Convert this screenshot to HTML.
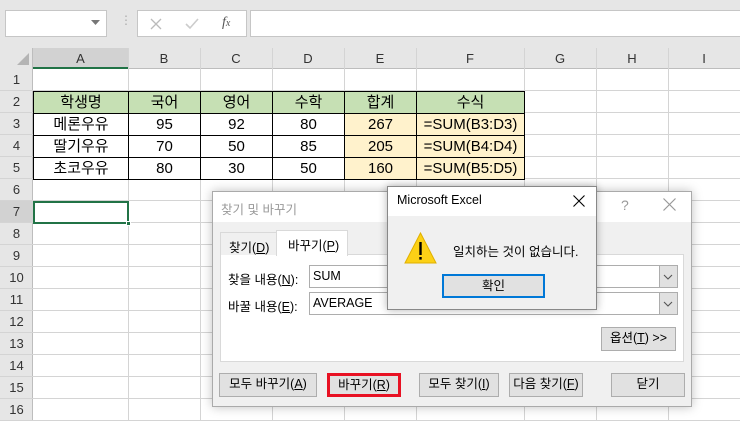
<!DOCTYPE html>
<html><head><meta charset="utf-8"><style>
*{box-sizing:border-box;margin:0;padding:0}
body{width:740px;height:421px;overflow:hidden;position:relative;background:#fff;font-family:"Liberation Sans","Noto Sans CJK KR",sans-serif;font-size:13px;color:#000}
.a{position:absolute}
.t{position:absolute;white-space:nowrap}
.hl{position:absolute;height:1px;background:#d4d4d4}
.vl{position:absolute;width:1px;background:#d4d4d4}
.btn{position:absolute;background:#e1e1e1;border:1px solid #adadad;text-align:center;font-size:12.5px;line-height:21px}
.cell{position:absolute;text-align:center;font-size:15px;line-height:22px;border:1px solid #000}
</style></head><body>
<div class="a" style="left:0;top:0;width:740px;height:48px;background:#e6e6e6"></div>
<div class="a" style="left:5px;top:10px;width:102px;height:27px;background:#fff;border:1px solid #c6c6c6"></div>
<svg class="a" style="left:91px;top:20px" width="10" height="6"><polygon points="0,0 9,0 4.5,5" fill="#777"/></svg>
<div class="t" style="left:120px;top:13px;color:#aaa;font-size:12px">⋮</div>
<div class="a" style="left:137px;top:10px;width:110px;height:27px;background:#fff;border:1px solid #c6c6c6"></div>
<svg class="a" style="left:150px;top:18px" width="12" height="12"><path d="M1 1L11 11M11 1L1 11" stroke="#bbb" stroke-width="1.3"/></svg>
<svg class="a" style="left:185px;top:18px" width="14" height="12"><path d="M1 6L5 10L13 1" stroke="#ccc" stroke-width="1.6" fill="none"/></svg>
<div class="t" style="left:222px;top:15px;color:#555;font-size:14px;font-style:italic;font-family:'Liberation Serif',serif">f<span style="font-size:10px">x</span></div>
<div class="a" style="left:250px;top:10px;width:495px;height:27px;background:#fff;border:1px solid #c6c6c6"></div>
<div class="a" style="left:0;top:48px;width:740px;height:21px;background:#e6e6e6;border-bottom:1px solid #bdbdbd"></div>
<div class="a" style="left:33px;top:48px;width:95px;height:21px;background:#d2d2d2;border-bottom:2px solid #217346"></div>
<div class="a" style="left:0;top:48px;width:33px;height:373px;background:#e6e6e6;border-right:1px solid #bdbdbd"></div>
<div class="a" style="left:0;top:201px;width:33px;height:22px;background:#d2d2d2"></div>
<svg class="a" style="left:16px;top:52px" width="14" height="14"><polygon points="13,1 13,13 1,13" fill="#b4b4b4"/></svg>
<script>
var xs=[33,128,200,272,344,416,524,596,668,740],L="ABCDEFGHI",h="";
for(var i=0;i<9;i++){h+='<div class="t" style="left:'+xs[i]+'px;width:'+(xs[i+1]-xs[i])+'px;top:51px;text-align:center;font-size:13px;color:#333">'+L[i]+'</div>';
 if(i>0)h+='<div class="vl" style="left:'+xs[i]+'px;top:48px;height:373px"></div>';}
for(var r=1;r<=16;r++){var y=69+(r-1)*22;h+='<div class="hl" style="left:0;width:740px;top:'+(y+21)+'px"></div><div class="t" style="left:0;width:33px;top:'+(y+3)+'px;text-align:center;font-size:13px;color:#333">'+r+'</div>';}
document.write(h);
var rows=[["학생명","국어","영어","수학","합계","수식"],["메론우유","95","92","80","267","=SUM(B3:D3)"],["딸기우유","70","50","85","205","=SUM(B4:D4)"],["초코우유","80","30","50","160","=SUM(B5:D5)"]];
var h2="";
for(var r=0;r<4;r++)for(var c=0;c<6;c++){var x=xs[c],w=xs[c+1]-x+1,y=91+r*22;var bg=r==0?"#c6e0b4":(c==4||c==5?"#fff2cc":"#fff");
h2+='<div class="cell" style="left:'+x+'px;top:'+y+'px;width:'+w+'px;height:23px;background:'+bg+'">'+rows[r][c]+'</div>';}
document.write(h2);
</script>
<div class="a" style="left:33px;top:201px;width:96px;height:23px;border:2px solid #217346"></div>
<div class="a" style="left:126px;top:221px;width:5px;height:5px;background:#217346;border:1px solid #fff"></div>
<div class="a" style="left:212px;top:191px;width:480px;height:216px;background:#f0f0f0;border:1px solid #aaa;box-shadow:0 0 10px rgba(0,0,0,.25)"></div>
<div class="a" style="left:213px;top:192px;width:478px;height:30px;background:#fff"></div>
<div class="t" style="left:221px;top:199px;color:#999;font-size:12.5px">찾기 및 바꾸기</div>
<div class="t" style="left:621px;top:197px;color:#999;font-size:14px">?</div>
<svg class="a" style="left:663px;top:198px" width="13" height="13"><path d="M0.5 0.5L12.5 12.5M12.5 0.5L0.5 12.5" stroke="#999" stroke-width="1.2"/></svg>
<div class="a" style="left:220px;top:254px;width:464px;height:108px;background:#fff;border:1px solid #d9d9d9"></div>
<div class="a" style="left:220px;top:232px;width:57px;height:23px;background:#f0f0f0;border:1px solid #d9d9d9;border-bottom:none"></div>
<div class="t" style="left:229px;top:237px;font-size:12.5px">찾기(<u>D</u>)</div>
<div class="a" style="left:276px;top:230px;width:72px;height:26px;background:#fff;border:1px solid #d9d9d9;border-bottom:none"></div>
<div class="t" style="left:288px;top:235px;font-size:12.5px">바꾸기(<u>P</u>)</div>
<div class="t" style="left:228px;top:269px;font-size:12.5px">찾을 내용(<u>N</u>):</div>
<div class="t" style="left:228px;top:296px;font-size:12.5px">바꿀 내용(<u>E</u>):</div>
<div class="a" style="left:309px;top:265px;width:369px;height:23px;background:#fff;border:1px solid #adadad"></div>
<div class="a" style="left:659px;top:266px;width:18px;height:21px;background:#e1e1e1;border-left:1px solid #adadad"></div>
<svg class="a" style="left:663px;top:274px" width="10" height="6"><path d="M1 1L5 5L9 1" stroke="#555" fill="none" stroke-width="1.1"/></svg>
<div class="t" style="left:313px;top:269px;font-size:12.5px">SUM</div>
<div class="a" style="left:309px;top:292px;width:369px;height:23px;background:#fff;border:1px solid #adadad"></div>
<div class="a" style="left:659px;top:293px;width:18px;height:21px;background:#e1e1e1;border-left:1px solid #adadad"></div>
<svg class="a" style="left:663px;top:301px" width="10" height="6"><path d="M1 1L5 5L9 1" stroke="#555" fill="none" stroke-width="1.1"/></svg>
<div class="t" style="left:313px;top:296px;font-size:12.5px">AVERAGE</div>
<div class="btn" style="left:601px;top:327px;width:75px;height:24px">옵션(<u>T</u>) &gt;&gt;</div>
<div class="btn" style="left:219px;top:373px;width:98px;height:24px">모두 바꾸기(<u>A</u>)</div>
<div class="btn" style="left:327px;top:373px;width:74px;height:24px;border:3px solid #e81123;line-height:18px">바꾸기(<u>R</u>)</div>
<div class="btn" style="left:419px;top:373px;width:80px;height:24px">모두 찾기(<u>I</u>)</div>
<div class="btn" style="left:509px;top:373px;width:74px;height:24px">다음 찾기(<u>F</u>)</div>
<div class="btn" style="left:611px;top:373px;width:74px;height:24px">닫기</div>
<div class="a" style="left:387px;top:186px;width:210px;height:124px;background:#f0f0f0;border:1px solid #888;box-shadow:0 0 8px rgba(0,0,0,.3)"></div>
<div class="a" style="left:388px;top:187px;width:208px;height:29px;background:#fff"></div>
<div class="t" style="left:397px;top:193px;font-size:12.5px">Microsoft Excel</div>
<svg class="a" style="left:573px;top:195px" width="12" height="12"><path d="M0.5 0.5L11.5 11.5M11.5 0.5L0.5 11.5" stroke="#000" stroke-width="1.1"/></svg>
<svg class="a" style="left:403px;top:231px" width="35" height="34"><polygon points="17.5,2 33,32 2,32" fill="#fcd116" stroke="#e0b000" stroke-width="1"/><rect x="16.3" y="11" width="2.4" height="13" fill="#000"/><rect x="16.3" y="26" width="2.4" height="2.6" fill="#000"/></svg>
<div class="t" style="left:453px;top:241px;font-size:12.5px">일치하는 것이 없습니다.</div>
<div class="a" style="left:442px;top:274px;width:103px;height:24px;background:#e1e1e1;border:2px solid #0078d7;text-align:center;line-height:20px;font-size:12.5px">확인</div>
</body></html>
